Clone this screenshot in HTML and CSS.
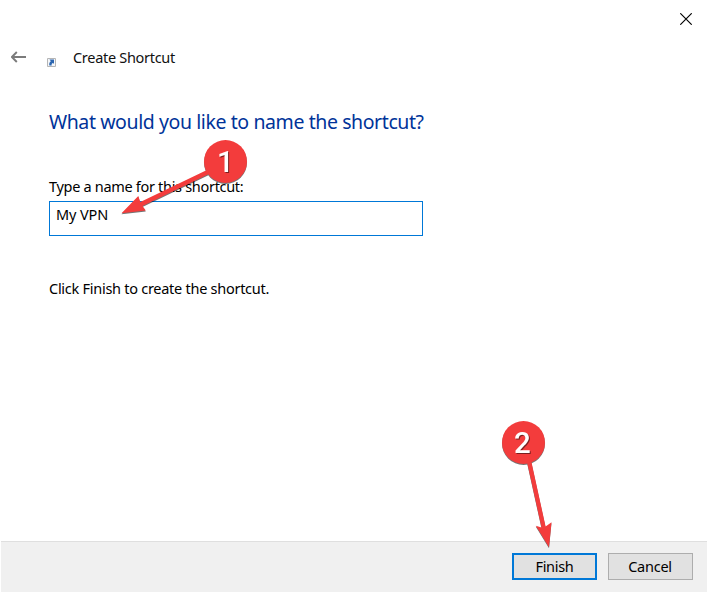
FILE: index.html
```html
<!DOCTYPE html>
<html lang="en">
<head>
<meta charset="utf-8">
<title>Create Shortcut</title>
<link rel="stylesheet" href="styles.css">
</head>
<body>
<div class="wizard">
  <div class="titlebar">
    <button class="icon-button close" aria-label="Close">
      <svg width="12" height="12" viewBox="0 0 12 12"><path d="M.3.3l11.4 11.4M11.7.3L.3 11.7" stroke="#000" stroke-width="1.15"/></svg>
    </button>
  </div>
  <header class="header">
    <button class="icon-button back" aria-label="Back">
      <svg width="16" height="12" viewBox="0 0 16 12" fill="none" stroke="#7b7b7b" stroke-width="1.9"><path d="M.9 6H15M5.800 1L.9 6l4.900 5"/></svg>
    </button>
    <svg class="shortcut-icon" width="9" height="9" viewBox="0 0 9 9"><path d="M.5.5h8v8h-8z" fill="#f4f6f9" stroke="#b5b5b5"/><path d="M2.500 1.500H7v4.300L5.800 4.900C4.600 5.500 4.500 6.200 4.700 7.500H2.400C1.900 5.800 2.400 4.300 3.900 3.300z" fill="#2c66b0"/></svg>
    <span class="title">Create Shortcut</span>
  </header>
  <main class="content">
    <h1 class="heading">What would you like to name the shortcut?</h1>
    <label class="label" for="name">Type a name for this shortcut:</label>
    <div class="field" id="name"><span class="value">My VPN</span></div>
    <p class="hint">Click Finish to create the shortcut.</p>
  </main>
  <footer class="footer">
    <button class="button primary"><span class="finish">Finish</span></button>
    <button class="button"><span class="cancel">Cancel</span></button>
  </footer>
  <svg class="annotations" width="708" height="593" viewBox="0 0 708 593">
    <g class="marker">
      <path d="M208 169.500L210 173.500L142.500 206L145.800 210.500L121.500 213.300L138.300 196L140.300 202z"/>
      <circle cx="225.500" cy="161.500" r="21.500"/>
      <path d="M526.800 461L531 460L545.600 526.500L551.500 522.300L549 547.300L535.800 525.800L541.500 527.500z"/>
      <circle cx="523.500" cy="442.500" r="21.500"/>
    </g>
    <g class="number">
      <text x="225.500" y="171.500">1</text>
      <text x="522.500" y="452.500">2</text>
    </g>
  </svg>
</div>
</body>
</html>
```
FILE: styles.css
```css
* { box-sizing: border-box; }
body { margin: 0; background: #fff; }
.wizard {
  position: relative;
  display: flex;
  flex-direction: column;
  width: 708px;
  height: 593px;
  padding: 0 1px 1px;
  overflow: hidden;
  color: #000;
  font: 14.5px/20px "Noto Sans", "Open Sans", sans-serif;
  white-space: nowrap;
}
.titlebar { display: flex; justify-content: flex-end; height: 38px; padding: 13px 15px 0 0; }
.icon-button { display: block; padding: 0; border: 0; background: none; line-height: 0; }
.close { width: 12px; height: 12px; }
.header { display: flex; align-items: center; height: 38px; padding-left: 10px; }
.back { width: 16px; height: 12px; }
.shortcut-icon { margin: 10px 0 0 20px; }
.title { margin-left: 17px; letter-spacing: -.3px; color: #111; }
.content { flex: 1; padding: 31px 0 0 48px; }
.heading {
  margin: 0 0 39px;
  color: #003399;
  font-size: 19.5px;
  font-weight: 400;
  line-height: 30px;
  letter-spacing: -.41px;
}
.label { display: block; height: 25px; letter-spacing: -.31px; }
.field { width: 374px; height: 35px; padding: 2px 6px; border: 1px solid #0078d7; background: #fff; }
.value { letter-spacing: -.1px; }
.hint { margin: 42px 0 0; letter-spacing: -.27px; }
.footer {
  display: flex;
  justify-content: flex-end;
  gap: 11px;
  height: 51px;
  padding: 11px 14px 0 0;
  border-top: 1px solid #dfdfdf;
  background: #f0f0f0;
}
.button {
  width: 85px;
  height: 27px;
  padding: 0 1px 2px 0;
  border: 1px solid #adadad;
  background: #e1e1e1;
  color: #000;
  font: inherit;
}
.primary { padding: 0 0 2px; border: 2px solid #0078d7; }
.finish { letter-spacing: -.3px; }
.cancel { letter-spacing: -.25px; }
.annotations { position: absolute; inset: 0; pointer-events: none; }
.marker { fill: #f33c3c; filter: drop-shadow(0 1px .6px rgba(0, 0, 0, .55)); }
.number {
  fill: #fff;
  font: 500 29.500px Roboto, "Liberation Sans", sans-serif;
  text-anchor: middle;
  filter: drop-shadow(1px 1px .6px rgba(0, 0, 0, .5));
}
```
